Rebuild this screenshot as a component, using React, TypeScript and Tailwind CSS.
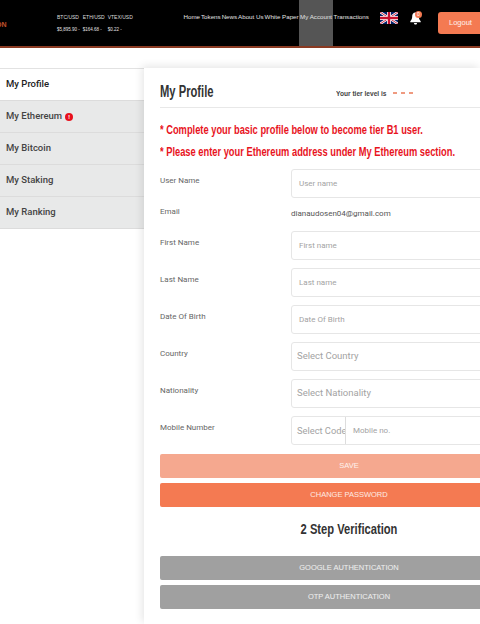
import React from "react";

const NAV = ["Home", "Tokens", "News", "About Us", "White Paper", "My Account", "Transactions"];

const TICKERS = [
  { pair: "BTC/USD", price: "$5,895.90 -" },
  { pair: "ETH/USD", price: "$164.68 -" },
  { pair: "VTEX/USD", price: "$0.22 -" },
];

const SIDE = ["My Profile", "My Ethereum", "My Bitcoin", "My Staking", "My Ranking"];

const FIELDS = [
  { label: "First Name", placeholder: "First name" },
  { label: "Last Name", placeholder: "Last name" },
  { label: "Date Of Birth", placeholder: "Date Of Birth" },
];

const heading = "font-['Liberation_Sans',sans-serif] font-bold";

function UkFlag() {
  return (
    <svg width="18" height="12" viewBox="0 0 60 40" aria-hidden="true">
      <rect width="60" height="40" fill="#012169" />
      <path d="M0 0L60 40M60 0L0 40" stroke="#fff" strokeWidth="8" />
      <path d="M0 0L60 40M60 0L0 40" stroke="#c8102e" strokeWidth="3" />
      <path d="M30 0V40M0 20H60" stroke="#fff" strokeWidth="13" />
      <path d="M30 0V40M0 20H60" stroke="#c8102e" strokeWidth="8" />
    </svg>
  );
}

function Bell() {
  return (
    <div className="relative w-[12px] h-[14px] ml-[12px]">
      <svg width="11" height="13" viewBox="0 0 11 13" className="absolute left-0 top-[1px]" aria-hidden="true">
        <path d="M5.5 0.5C3 0.5 2.2 2.6 2.2 4.6C2.2 7 1.4 8.2 0.3 9.3V10.2H10.7V9.3C9.6 8.2 8.8 7 8.8 4.6C8.8 2.6 8 0.5 5.5 0.5Z" fill="#fff" />
        <path d="M4 11H7C7 12 6.4 12.6 5.5 12.6C4.6 12.6 4 12 4 11Z" fill="#fff" />
      </svg>
      <span className="absolute left-[5px] top-0 w-[7px] h-[7px] rounded-full bg-[#f47a52] text-white text-[5px] leading-[7px] text-center">0</span>
    </div>
  );
}

function Row({ label, children }: { label: string; children: React.ReactNode }) {
  return (
    <div className="flex h-[37px]">
      <div className="w-[131px] shrink-0 pt-[6px] text-[8px] leading-[12px] text-[#666]">{label}</div>
      {children}
    </div>
  );
}

function Box({ children, size = "text" }: { children: React.ReactNode; size?: "text" | "select" }) {
  return (
    <div
      className={`w-[260px] h-[29px] shrink-0 border border-[#e6e6e6] rounded-[3px] flex items-center text-[#a3a3a3] ${
        size === "select" ? "text-[9.5px] pl-[5px]" : "text-[8px] pl-[7px]"
      }`}
    >
      {children}
    </div>
  );
}

function Btn({ label, color }: { label: string; color: string }) {
  return (
    <div className={`w-[378px] h-[24px] mb-[5px] rounded-[2px] flex items-center justify-center text-[7.5px] text-white/85 font-['Liberation_Sans',sans-serif] ${color}`}>
      {label}
    </div>
  );
}

export default function App() {
  return (
    <div className="w-[480px] h-[624px] overflow-hidden bg-white font-['Roboto',sans-serif]">
      <header className="h-[48px] bg-black border-b-2 border-[#8a3a22] flex items-start">
        <div className={`w-[57px] shrink-0 pt-[20px] text-[7px] leading-[10px] text-[#c2502a] ${heading}`}>
          <span className="-ml-[4px] block">ON</span>
        </div>
        <div className="w-[126px] shrink-0 flex gap-[3px] pt-[13px] text-[5px] text-[#ddd] font-['Liberation_Sans',sans-serif]">
          {TICKERS.map((t) => (
            <div key={t.pair} className="flex flex-col gap-[5px] leading-[8px]">
              <span>{t.pair}</span>
              <span className="text-[#e2e2e2] text-[4.5px] whitespace-nowrap">{t.price}</span>
            </div>
          ))}
        </div>
        <nav className="w-[197px] shrink-0 flex items-stretch h-[46px] text-[6.2px] leading-[33px] text-[#e2e2e2] font-['Liberation_Sans',sans-serif] font-medium">
          {NAV.map((item) => (
            <span
              key={item}
              className={`whitespace-nowrap px-[0.5px] ${item === "My Account" ? "bg-[#555] w-[34px] text-center" : ""}`}
            >
              {item}
            </span>
          ))}
        </nav>
        <div className="pt-[12px]">
          <UkFlag />
        </div>
        <div className="pt-[11px]">
          <Bell />
        </div>
        <div className="ml-[16px] mt-[12px] w-[44px] h-[22px] shrink-0 bg-[#f47a52] rounded-[3px] text-[7.5px] leading-[22px] pl-[11px] text-white/90 font-['Liberation_Sans',sans-serif]">
          Logout
        </div>
      </header>

      <div className="flex mt-[20px]">
        <aside className="w-[144px] shrink-0 self-start border-t border-[#e2e2e2]">
          {SIDE.map((item, i) => (
            <div
              key={item}
              className={`h-[32px] border-b border-[#dcdcdc] pl-[6px] flex items-center gap-[3px] text-[9.5px] font-medium ${
                i === 0 ? "bg-white text-[#222]" : "bg-[#e8e9e9] text-[#444]"
              }`}
            >
              {item}
              {item === "My Ethereum" && (
                <span className="w-[8px] h-[8px] rounded-full bg-[#e8101c] text-white text-[6px] leading-[8px] text-center font-bold">!</span>
              )}
            </div>
          ))}
        </aside>

        <main className="flex-1 min-w-0 pl-[16px] shadow-[-2px_-2px_8px_rgba(0,0,0,0.1)] h-[556px]">
          <div className="w-[400px] h-[40px] flex items-start border-b border-[#e8e8e8] pt-[15px]">
            <h1 className={`w-[176px] shrink-0 text-[16px] leading-[18px] text-[#333] origin-left scale-x-[0.7] whitespace-nowrap ${heading}`}>My Profile</h1>
            <span className={`w-[51px] shrink-0 pt-[6px] text-[7.5px] leading-[10px] text-[#444] origin-left scale-x-[0.88] whitespace-nowrap ${heading}`}>Your tier level is</span>
            <span className="ml-[6px] mt-[9px] flex gap-[4px]">
              <i className="block w-[4px] h-[2px] bg-[#ef9a80]" />
              <i className="block w-[4px] h-[2px] bg-[#ef9a80]" />
              <i className="block w-[4px] h-[2px] bg-[#ef9a80]" />
            </span>
          </div>

          <p className={`mt-[11px] text-[12px] leading-[22px] text-[#e8141e] whitespace-nowrap origin-left scale-x-[0.776] ${heading}`}>
            * Complete your basic profile below to become tier B1 user.
          </p>
          <p className={`text-[12px] leading-[22px] text-[#e8141e] whitespace-nowrap origin-left scale-x-[0.776] ${heading}`}>
            * Please enter your Ethereum address under My Ethereum section.
          </p>

          <div className="mt-[6px] w-[400px]">
            <Row label="User Name">
              <Box>User name</Box>
            </Row>
            <div className="flex h-[25px]">
              <div className="w-[131px] shrink-0 text-[8px] leading-[12px] text-[#666]">Email</div>
              <div className="pt-[2px] text-[8px] leading-[12px] text-[#555]">dianaudosen04@gmail.com</div>
            </div>
            {FIELDS.map((f) => (
              <Row key={f.label} label={f.label}>
                <Box>{f.placeholder}</Box>
              </Row>
            ))}
            <Row label="Country">
              <Box size="select">Select Country</Box>
            </Row>
            <Row label="Nationality">
              <Box size="select">Select Nationality</Box>
            </Row>
            <Row label="Mobile Number">
              <div className="w-[260px] h-[29px] shrink-0 border border-[#e6e6e6] rounded-[3px] flex items-center">
                <span className="w-[54px] h-full shrink-0 pl-[5px] border-r border-[#ddd] text-[9.3px] leading-[27px] text-[#a3a3a3] whitespace-nowrap overflow-hidden">Select Code</span>
                <span className="pl-[7px] text-[8px] text-[#a3a3a3]">Mobile no.</span>
              </div>
            </Row>
          </div>

          <div className="mt-[1px]">
            <Btn label="SAVE" color="bg-[#f5a88f]" />
            <Btn label="CHANGE PASSWORD" color="bg-[#f47a52]" />
          </div>
          <h2 className={`w-[378px] mt-[13px] mb-[18px] text-center text-[14.5px] leading-[18px] text-[#333] scale-x-[0.77] ${heading}`}>2 Step Verification</h2>
          <Btn label="GOOGLE AUTHENTICATION" color="bg-[#a0a0a0]" />
          <Btn label="OTP AUTHENTICATION" color="bg-[#a0a0a0]" />
        </main>
      </div>
    </div>
  );
}
